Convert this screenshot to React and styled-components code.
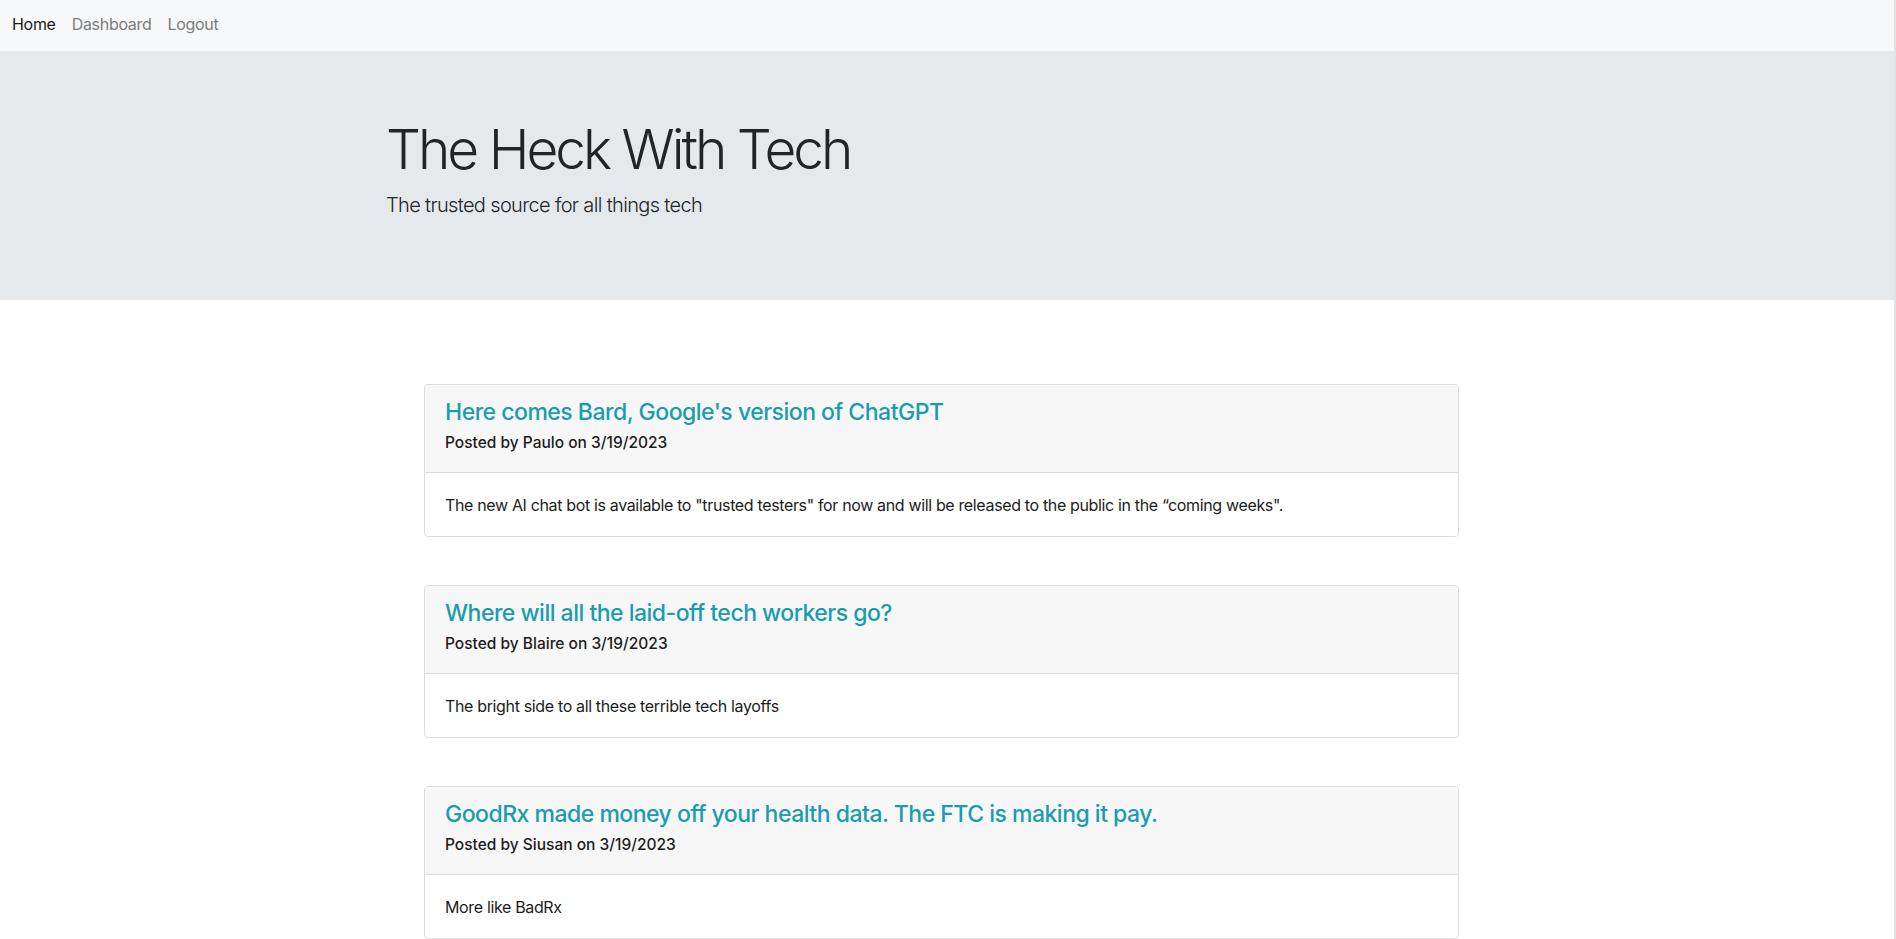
import styled, { createGlobalStyle } from "styled-components";

const GlobalStyle = createGlobalStyle`
  * { box-sizing: border-box; }
  body {
    margin: 0;
    font-family: Inter, "Noto Sans", "Liberation Sans", sans-serif;
    color: #212529;
    background: #ffffff;
  }
`

const Page = styled.div`
  min-height: 939px;
  border-right: 2px solid #e3e3e3;
`

const Navbar = styled.nav`
  display: flex;
  align-items: center;
  gap: 16px;
  height: 51px;
  padding: 0 0 4px 12px;
  background-color: #f7f8fa;
`

const NavLink = styled.a`
  font-size: 16px;
  letter-spacing: -0.3px;
  text-decoration: none;
  color: ${({ active }) => (active ? "#1b1b1b" : "#7c7c7c")};
  cursor: pointer;
`

const Jumbotron = styled.header`
  height: 249px;
  padding: 65px 0 0 386px;
  background-color: #e6e9ec;
`

const Title = styled.h1`
  margin: 0 0 8px;
  font-size: 55px;
  font-weight: 300;
  line-height: 66px;
  letter-spacing: -3px;
  color: #212529;
`

const Lead = styled.p`
  margin: 0;
  font-size: 20px;
  font-weight: 300;
  line-height: 30px;
  letter-spacing: -0.65px;
  color: #212529;
`

const Feed = styled.main`
  display: flex;
  flex-direction: column;
  gap: 48px;
  width: 1035px;
  margin: 84px 0 0 424px;
`

const Card = styled.article`
  border: 1px solid #dedede;
  border-radius: 4px;
  overflow: hidden;
`

const CardHeader = styled.div`
  padding: 13px 20px 17px;
  background-color: #f7f7f7;
  border-bottom: 1px solid #dedede;
`

const PostTitle = styled.a`
  display: block;
  font-size: 23px;
  font-weight: 500;
  line-height: 28px;
  letter-spacing: -0.5px;
  color: #1a9cb0;
  text-decoration: none;
`

const Meta = styled.div`
  margin-top: 5px;
  font-size: 15.5px;
  font-weight: 500;
  line-height: 24px;
  color: #1c1c1c;
`

const CardBody = styled.div`
  padding: 20px 20px 19px;
  font-size: 16px;
  line-height: 24px;
  letter-spacing: -0.35px;
  color: #1c1c1c;
`

const posts = [
  {
    title: "Here comes Bard, Google's version of ChatGPT",
    author: "Paulo",
    date: "3/19/2023",
    body: 'The new AI chat bot is available to "trusted testers" for now and will be released to the public in the \u201ccoming weeks".',
  },
  {
    title: "Where will all the laid-off tech workers go?",
    author: "Blaire",
    date: "3/19/2023",
    body: "The bright side to all these terrible tech layoffs",
  },
  {
    title: "GoodRx made money off your health data. The FTC is making it pay.",
    author: "Siusan",
    date: "3/19/2023",
    body: "More like BadRx",
  },
]

function App() {
  return (
    <Page>
      <GlobalStyle />
      <Navbar>
        <NavLink active>Home</NavLink>
        <NavLink>Dashboard</NavLink>
        <NavLink>Logout</NavLink>
      </Navbar>
      <Jumbotron>
        <Title>The Heck With Tech</Title>
        <Lead>The trusted source for all things tech</Lead>
      </Jumbotron>
      <Feed>
        {posts.map((post) => (
          <Card key={post.title}>
            <CardHeader>
              <PostTitle>{post.title}</PostTitle>
              <Meta>
                Posted by {post.author} on {post.date}
              </Meta>
            </CardHeader>
            <CardBody>{post.body}</CardBody>
          </Card>
        ))}
      </Feed>
    </Page>
  )
}

export default App
